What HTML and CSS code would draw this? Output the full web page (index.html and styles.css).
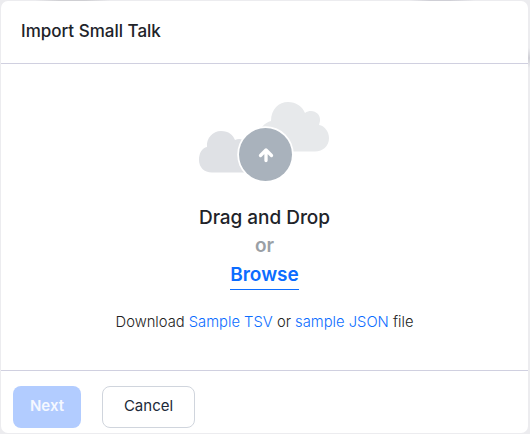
FILE: index.html
```html
<!DOCTYPE html>
<html lang="en">
<head>
<meta charset="utf-8">
<title>Import Small Talk</title>
<link rel="stylesheet" href="styles.css">
</head>
<body>
<section class="dialog">
  <header class="dialog-header"><h1><span>Import Small Talk</span></h1></header>
  <main class="dropzone">
    <svg class="cloud-art" width="132" height="82" viewBox="198 101 132 82" aria-hidden="true">
      <path fill="#e7e9eb" d="M262 127C265 123 268 122 271 121C271 109 279 102 288 102C296 102 302 106 305 113C312 108 321 113 320 121L319 125C325 126 329 132 329 138C329 146 323 151.500 315 151.500H264Z"/>
      <path fill="#dfe1e5" d="M212 172.500C204 172.500 199 167 199 160C199 153 202 148 207 147C206 138 213 131 221 131C229 131 233 135 235 140C239 138 242 139 245 141V172.500Z"/>
      <circle cx="265.500" cy="154.500" r="28.300" fill="#fff"/>
      <circle cx="265.500" cy="154.500" r="26.500" fill="#a9b2bc"/>
      <path d="M266 160.500V150M260.500 155.500L266 150L271.500 155.500" fill="none" stroke="#fff" stroke-width="3.300" stroke-linecap="round" stroke-linejoin="round"/>
    </svg>
    <p class="prompt"><span>Drag and Drop</span></p>
    <p class="prompt muted"><span>or</span></p>
    <a class="browse">Browse</a>
    <p class="samples"><span>Download <a>Sample TSV</a> or <a>sample JSON</a> file</span></p>
  </main>
  <footer class="dialog-footer">
    <button class="next" disabled>Next</button>
    <button class="cancel">Cancel</button>
  </footer>
</section>
</body>
</html>
```
FILE: styles.css
```css
* { box-sizing: border-box; }
body {
  margin: 0;
  height: 434px;
  padding: 1px 2px 1px 1px;
  background:
    linear-gradient(90deg, transparent 35px, #cfcfd3 60px 85px, transparent 110px 410px, #cfcfd6 430px 450px, transparent 475px) 0 0 / 530px 1px no-repeat,
    linear-gradient(transparent 48px, #cfcfd6 58px, transparent 68px) 528px 0 / 2px 434px no-repeat,
    #ececef;
  font-family: Inter, "Liberation Sans", sans-serif;
  color: #212329;
}
h1, p { margin: 0; }
.dialog {
  height: 432px;
  width: 527px;
  display: flex;
  flex-direction: column;
  background: #fff;
  border-radius: 7px;
}
.dialog-header {
  flex: none;
  height: 63px;
  padding: 20px 20px 0;
  border-bottom: 1px solid #d0d0e0;
}
h1 { font-size: 17px; font-weight: 500; line-height: 20px; }
.dropzone {
  flex: none;
  height: 307px;
  padding-top: 37px;
  display: flex;
  flex-direction: column;
  align-items: center;
  border-bottom: 1px solid #d0d0e0;
}
.cloud-art { display: block; flex: none; margin-right: 2px; }
.prompt { margin-top: 21px; font-size: 19px; font-weight: 500; line-height: 28px; letter-spacing: -0.04px; }
.prompt.muted { margin-top: 0; color: #9aa0a6; font-weight: 600; }
.browse {
  margin-top: 2px;
  height: 28px;
  border-bottom: 1px solid #0b6cff;
  color: #0b6cff;
  font-size: 19px;
  font-weight: 600;
  line-height: 26px;
}
.samples { margin-top: 22px; font-size: 14.750px; font-weight: 300; line-height: 20px; color: #222; }
.samples a { color: #0b6cff; font-weight: 350; }
.dialog-footer { display: flex; gap: 21px; padding: 15px 12px 5px; }
button {
  height: 42px;
  border-radius: 8px;
  font: 400 15px/20px Inter, "Liberation Sans", sans-serif;
  padding: 0 0 2px;
}
.next { width: 68px; border: 0; background: #b2ccff; color: #f5f8ff; font-weight: 600; }
.cancel { width: 93px; border: 1px solid #d0d5dd; background: #fff; color: #202939; }
```
